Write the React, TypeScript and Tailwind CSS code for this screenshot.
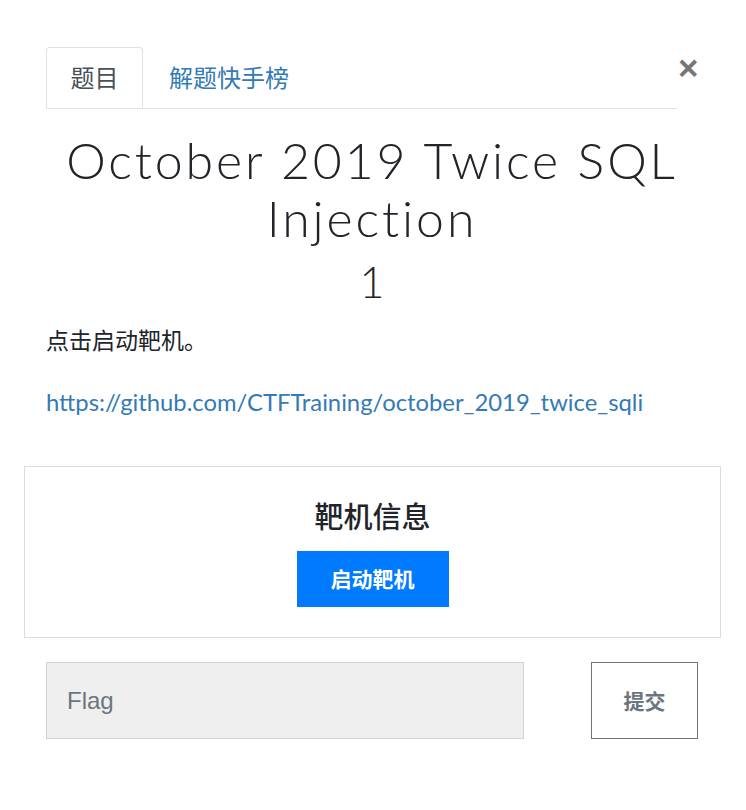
import React from "react";

export default function App() {
  return (
    <div className="w-[746px] h-[810px] bg-white text-[#212529] font-['Lato','Noto_Sans_CJK_SC',sans-serif]">
      <div className="pl-[24px] pr-[25px] pt-[47px]">
        {/* header tabs */}
        <div className="flex items-start pl-[22px] pr-[23px]">
          <div className="flex flex-1 border-b border-[#dee2e6]">
            <div className="h-[61px] w-[97px] -mb-px flex items-center justify-center border border-b-white border-[#dee2e6] rounded-t-[4px] bg-white text-[24px] text-[#495057]">
              题目
            </div>
            <div className="h-[61px] pl-[26px] flex items-center text-[24px] text-[#337ab7]">
              解题快手榜
            </div>
          </div>
          <button className="w-[20px] ml-[1px] mt-[3px] text-[35px] leading-none font-bold text-[#777] font-['Liberation_Sans',sans-serif]">
            ×
          </button>
        </div>

        {/* title */}
        <div className="pl-[22px] pr-[23px] text-center pt-[22px]">
          <h2 className="text-[50px] leading-[58px] font-light tracking-[2.9px]">
            October 2019 Twice SQL Injection
          </h2>
          <h3 className="text-[43px] leading-[50px] font-light mt-[10px]">1</h3>
        </div>

        {/* description */}
        <div className="pl-[22px] pr-[23px] pt-[16px]">
          <p className="text-[23px] leading-[34px]">点击启动靶机。</p>
          <p className="text-[23.8px] leading-[34px] mt-[28px]">
            <a className="text-[#337ab7]" href="#">
              https://github.com/CTFTraining/october_2019_twice_sqli
            </a>
          </p>
        </div>

        {/* instance card */}
        <div className="mt-[47px] h-[172px] border border-[#dcdcdc] flex flex-col items-center pt-[32px]">
          <h4 className="text-[29px] leading-[36px] font-medium">靶机信息</h4>
          <button className="mt-[16px] w-[152px] h-[56px] bg-[#007bff] text-white text-[21px] font-bold">
            启动靶机
          </button>
        </div>

        {/* flag submit */}
        <div className="pl-[22px] pr-[23px] mt-[24px] flex items-center">
          <input
            className="w-[478px] h-[77px] bg-[#efefef] border border-[#ced4da] px-[20px] text-[24px] font-['Liberation_Sans',sans-serif] placeholder:text-[#6c757d] outline-none"
            placeholder="Flag"
          />
          <button className="ml-auto w-[107px] h-[77px] border border-[#6c757d] text-[21px] font-bold text-[#6c757d]">
            提交
          </button>
        </div>
      </div>
    </div>
  );
}
